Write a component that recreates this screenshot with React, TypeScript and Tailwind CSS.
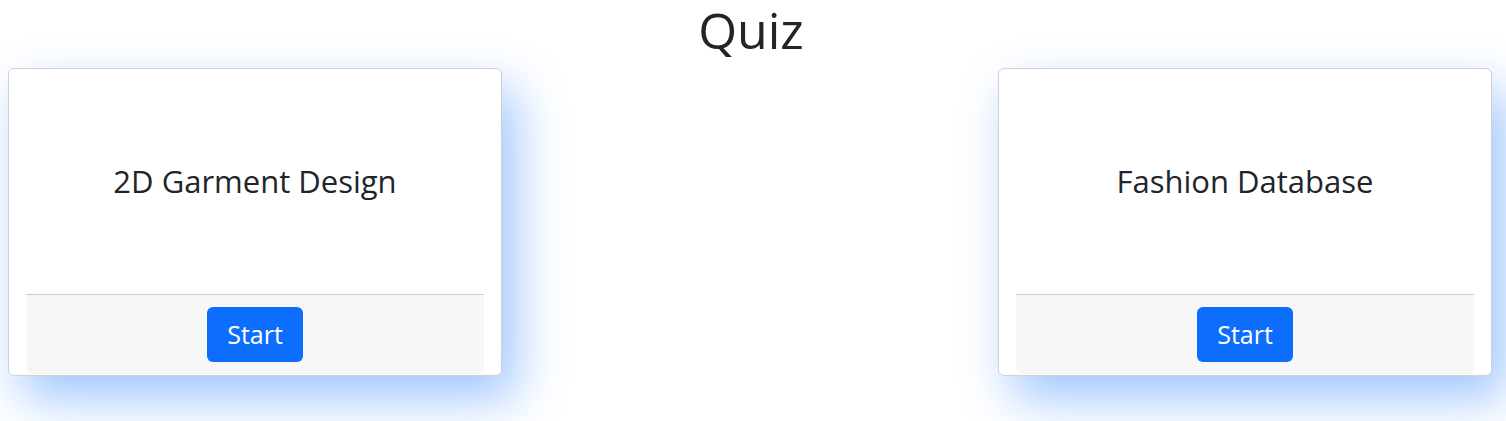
import React from "react";

const font = { fontFamily: '"Segoe UI", "Open Sans", "Noto Sans", "Liberation Sans", sans-serif' };

function QuizCard({ title }: { title: string }) {
  return (
    <div className="flex h-[308px] w-[494px] flex-col rounded-[6px] border border-[#d0d0d3] bg-white shadow-[14px_22px_50px_rgba(13,110,253,0.4)]">
      <div className="flex flex-1 items-center justify-center">
        <h3 className="text-[31px] leading-[1.2] text-[#212529]">{title}</h3>
      </div>
      <div className="mx-[17px] mb-[1px] flex h-[80px] justify-center rounded-b-[6px] border-t border-[#cfcfcf] bg-[#f7f7f7] pt-[12px]">
        <button className="h-[55px] w-[96px] rounded-[6px] bg-[#0d6efd] text-[25px] leading-none text-white">
          Start
        </button>
      </div>
    </div>
  );
}

export default function App() {
  return (
    <div className="min-h-[421px] w-full bg-white" style={font}>
      <h1 className="pr-[4px] text-center text-[50px] leading-[1.2] text-[#212529]">Quiz</h1>
      <div className="mt-[8px] flex justify-between pl-[8px] pr-[14px]">
        <QuizCard title="2D Garment Design" />
        <QuizCard title="Fashion Database" />
      </div>
    </div>
  );
}
